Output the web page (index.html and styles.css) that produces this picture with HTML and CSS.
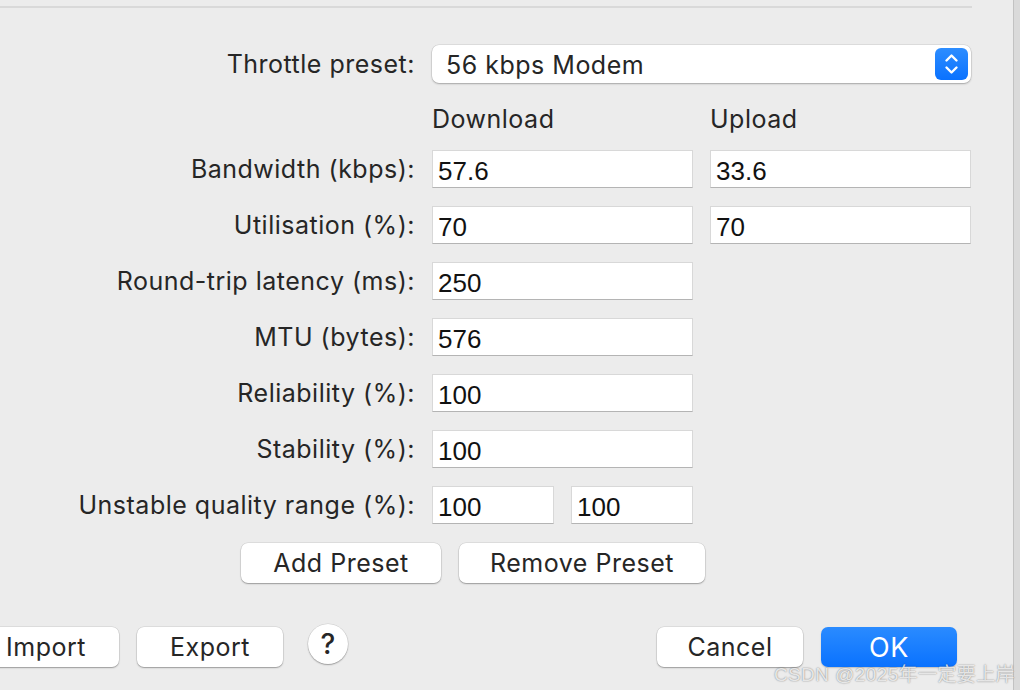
FILE: index.html
```html
<!DOCTYPE html>
<html>
<head>
<meta charset="utf-8">
<link rel="stylesheet" href="styles.css">
</head>
<body>
<div class="page">
  <div class="window">
    <div class="rule"></div>
    <div class="form">
      <div class="label">Throttle preset:</div>
      <div class="popup span2">
        <span class="popup-text">56 kbps Modem</span>
        <span class="stepper">
          <svg width="33" height="32" viewBox="0 0 33 32"><path d="M11.5 12.5 L16.5 7.5 L21.5 12.5" /><path d="M11.5 19.5 L16.5 24.5 L21.5 19.5" /></svg>
        </span>
      </div>

      <div class="label"></div>
      <div class="colhead">Download</div>
      <div class="colhead">Upload</div>

      <div class="label">Bandwidth (kbps):</div>
      <div class="field">57.6</div>
      <div class="field">33.6</div>

      <div class="label">Utilisation (%):</div>
      <div class="field">70</div>
      <div class="field">70</div>

      <div class="label">Round-trip latency (ms):</div>
      <div class="field">250</div>
      <div></div>

      <div class="label">MTU (bytes):</div>
      <div class="field">576</div>
      <div></div>

      <div class="label">Reliability (%):</div>
      <div class="field">100</div>
      <div></div>

      <div class="label">Stability (%):</div>
      <div class="field">100</div>
      <div></div>

      <div class="label">Unstable quality range (%):</div>
      <div class="pair">
        <div class="field">100</div>
        <div class="field">100</div>
      </div>
      <div></div>
    </div>

    <div class="preset-row">
      <button class="btn add">Add Preset</button>
      <button class="btn remove">Remove Preset</button>
    </div>

    <div class="bottom-row">
      <div class="group">
        <button class="btn wide">Import</button>
        <button class="btn wide">Export</button>
        <button class="help">?</button>
      </div>
      <div class="group">
        <button class="btn wide">Cancel</button>
        <button class="btn ok">OK</button>
      </div>
    </div>
  </div>
  <div class="edge"></div>
  <div class="watermark">CSDN @2025年一定要上岸</div>
</div>
</body>
</html>
```

FILE: styles.css
```css
html, body {
  margin: 0;
  padding: 0;
  background: #ececec;
}

.page {
  position: relative;
  display: flex;
  width: 1020px;
  height: 690px;
  overflow: hidden;
  font-family: "Inter", "Liberation Sans", sans-serif;
  color: #262626;
  font-size: 25px;
  letter-spacing: 0.5px;
}

.window {
  flex: 1;
  padding-top: 6px;
}

.edge {
  width: 6px;
  border-left: 1px solid #c2c2c2;
  background: #dadada;
}

.rule {
  width: 972px;
  height: 2px;
  background: #d9d9d9;
}

.form {
  display: grid;
  grid-template-columns: 415px 261px 261px;
  grid-template-rows: 38px 31px repeat(7, 38px);
  column-gap: 17px;
  row-gap: 18px;
  margin-top: 37px;
}

.label {
  text-align: right;
  align-self: center;
  white-space: nowrap;
}

.span2 {
  grid-column: span 2;
}

.popup {
  display: flex;
  align-items: center;
  justify-content: space-between;
  background: #fff;
  border-radius: 7px;
  box-shadow: 0 0 0 0.5px rgba(0, 0, 0, 0.12), 0 1px 2px rgba(0, 0, 0, 0.25);
  padding-left: 14px;
  padding-right: 3px;
}

.popup-text {
  padding-top: 2px;
}

.stepper {
  display: flex;
  width: 33px;
  height: 32px;
  border-radius: 6px;
  background: linear-gradient(#2d8dff, #0a72ff);
}

.stepper path {
  fill: none;
  stroke: #fff;
  stroke-width: 2.4;
  stroke-linecap: round;
  stroke-linejoin: round;
}

.colhead {
  align-self: end;
  line-height: 26px;
}

.field {
  background: #fff;
  border: 1px solid #d8d8d8;
  border-bottom-color: #b4b4b4;
  box-sizing: border-box;
  height: 38px;
  padding: 3px 5px 0;
  font-family: "Liberation Sans", sans-serif;
  font-size: 26px;
  letter-spacing: 0;
  line-height: 35px;
  color: #111;
}

.pair {
  display: grid;
  grid-template-columns: 1fr 1fr;
  column-gap: 17px;
}

.preset-row {
  display: flex;
  gap: 18px;
  margin-top: 19px;
  padding-left: 241px;
}

.btn {
  font-family: inherit;
  font-size: 25px;
  letter-spacing: 0.5px;
  color: #262626;
  background: #fff;
  border: none;
  border-radius: 7px;
  height: 40px;
  padding: 0;
  box-shadow: 0 0 0 0.5px rgba(0, 0, 0, 0.12), 0 1px 1.5px rgba(0, 0, 0, 0.3);
}

.add {
  width: 200px;
}

.remove {
  width: 246px;
}

.bottom-row {
  display: flex;
  justify-content: space-between;
  margin-top: 44px;
  margin-left: -27px;
  padding-right: 56px;
}

.group {
  display: flex;
  align-items: center;
  gap: 18px;
}

.wide {
  width: 146px;
}

.help {
  width: 40px;
  height: 40px;
  margin-left: 7px;
  margin-top: -6px;
  border-radius: 50%;
  border: none;
  background: #fff;
  padding: 0;
  font-family: inherit;
  font-size: 28px;
  font-weight: 500;
  color: #262626;
  box-shadow: 0 0 0 0.5px rgba(0, 0, 0, 0.12), 0 1px 1.5px rgba(0, 0, 0, 0.3);
}

.ok {
  width: 136px;
  color: #fff;
  background: linear-gradient(#2a8bff, #0a72ff);
  font-size: 27px;
  box-shadow: 0 1px 1.5px rgba(0, 0, 0, 0.2);
}

.watermark {
  position: absolute;
  right: 5px;
  top: 659px;
  font-family: "Liberation Sans", "Noto Sans CJK SC", sans-serif;
  font-size: 19px;
  letter-spacing: 0.4px;
  color: rgba(255, 255, 255, 0.8);
  text-shadow: 0 0 1.5px rgba(0, 0, 0, 0.55);
  white-space: nowrap;
}
```
